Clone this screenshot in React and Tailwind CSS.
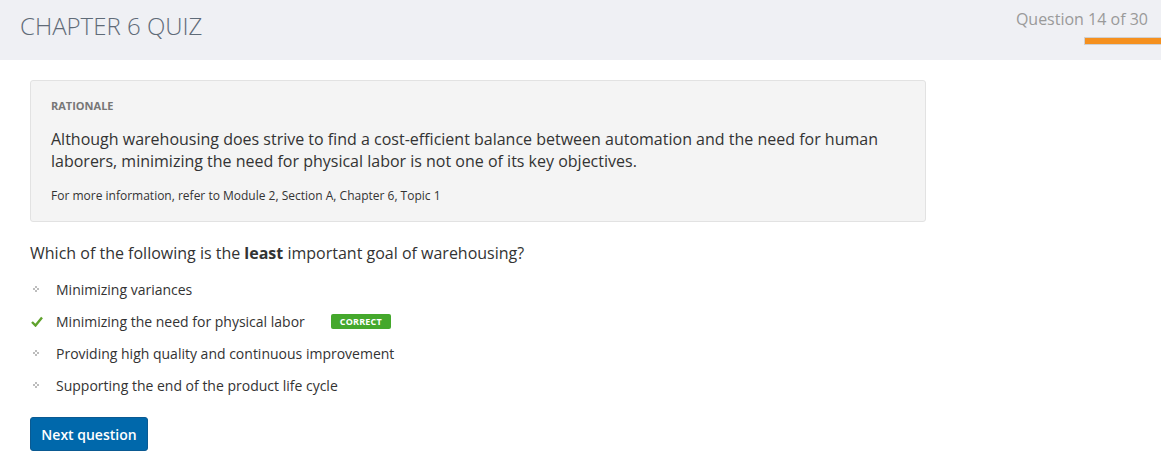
const options = [
  { text: "Minimizing variances" },
  { text: "Minimizing the need for physical labor", correct: true },
  { text: "Providing high quality and continuous improvement" },
  { text: "Supporting the end of the product life cycle" },
];

function Dot() {
  return (
    <svg width="8" height="8" viewBox="0 0 8 8" className="text-[#bdbdbd]">
      <rect x="3" y="1" width="2" height="2" fill="currentColor" />
      <rect x="1" y="3" width="2" height="2" fill="currentColor" />
      <rect x="5" y="3" width="2" height="2" fill="currentColor" />
      <rect x="3" y="5" width="2" height="2" fill="currentColor" />
    </svg>
  );
}

function Check() {
  return (
    <svg width="12" height="11" viewBox="0 0 12 11">
      <path d="M1 6 L4.5 9.5 L11 1.5" fill="none" stroke="#5fa22c" strokeWidth="2.4" />
    </svg>
  );
}

export default function App() {
  return (
    <div className="min-h-[462px] bg-white font-['Open_Sans',sans-serif] text-[#333]">
      <header className="flex h-[60px] items-start justify-between bg-[#eff0f4]">
        <h1 className="pl-5 pt-[9px] text-[24px] font-light leading-[34px] text-[#5f6b78]">
          CHAPTER 6 QUIZ
        </h1>
        <div className="flex flex-col items-end">
          <div className="pr-[13px] pt-[8px] text-[16px] leading-[22px] text-[#9a9a9a]">
            Question 14 of 30
          </div>
          <div className="mt-[7px] h-[8px] w-[77px] border border-[#d0d0d0] border-r-0 bg-[#f5901e]" />
        </div>
      </header>

      <main className="px-[30px] pt-5">
        <section className="w-[896px] rounded-[3px] border border-[#e2e2e2] bg-[#f4f4f4] px-5 pb-[16px] pt-[17px]">
          <div className="text-[11px] font-bold leading-[16px] text-[#777]">RATIONALE</div>
          <p className="mt-[14px] text-[16px] leading-[22px] text-[#333]">
            Although warehousing does strive to find a cost-efficient balance between automation and the need for human laborers, minimizing the need for physical labor is not one of its key objectives.
          </p>
          <p className="mt-[15px] text-[12px] leading-[18px] text-[#333]">
            For more information, refer to Module 2, Section A, Chapter 6, Topic 1
          </p>
        </section>

        <p className="mt-[20px] text-[16px] leading-[22px]">
          Which of the following is the <b className="font-bold">least</b> important goal of warehousing?
        </p>

        <ul className="mt-[9px] flex flex-col">
          {options.map((o) => (
            <li key={o.text} className="flex h-8 items-center text-[14px] text-[#333]">
              <span className="flex w-[26px] items-center justify-start pl-[1px]">
                {o.correct ? <Check /> : <span className="pl-[1px]"><Dot /></span>}
              </span>
              <span>{o.text}</span>
              {o.correct && (
                <span className="ml-[26px] rounded-[2px] bg-[#44a82c] px-[9px] py-[1px] text-[9px] font-bold leading-[13px] tracking-[0.02em] text-white">
                  CORRECT
                </span>
              )}
            </li>
          ))}
        </ul>

        <button className="mt-[16px] h-[34px] w-[118px] rounded-[3px] border border-[#0a5a92] bg-[#0068ab] text-[14px] font-semibold text-white">
          Next question
        </button>
      </main>
    </div>
  );
}
